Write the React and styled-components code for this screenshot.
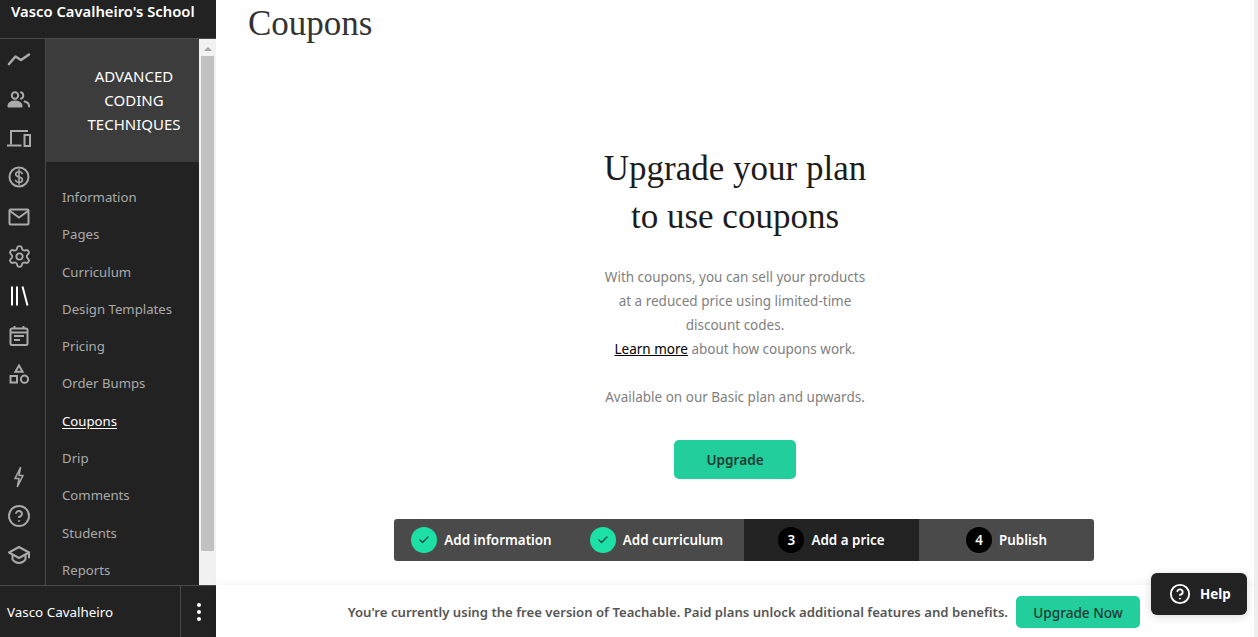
import styled, { createGlobalStyle } from "styled-components";
import { Check, CircleHelp, Settings } from "lucide-react";

const GlobalStyle = createGlobalStyle`
  html, body {
    margin: 0;
    height: 100%;
    overflow: hidden;
    background: #fff;
    font-family: "Noto Sans", "Open Sans", sans-serif;
  }
  * { box-sizing: border-box; }
`;

const Page = styled.div`
  position: relative;
  display: flex;
  width: 1258px;
  height: 637px;
  overflow: hidden;
`;

/* left dark column */
const Sidebar = styled.aside`
  display: flex;
  flex-direction: column;
  flex: 0 0 216px;
  height: 100%;
  background: #222;
`;

const SchoolName = styled.div`
  flex: 0 0 39px;
  padding: 1px 0 0 11px;
  border-bottom: 1px solid #4a4a4a;
  color: #fff;
  font-size: 14.8px;
  font-weight: 600;
  line-height: 20px;
  white-space: nowrap;
`;

const SideBody = styled.div`
  display: flex;
  flex: 1;
  min-height: 0;
`;

const Rail = styled.nav`
  display: flex;
  flex-direction: column;
  flex: 0 0 46px;
  padding: 0.6px 0 10px;
  border-right: 1px solid #4a4a4a;
`;

const RailItem = styled.div`
  display: flex;
  flex: 0 0 39.4px;
  align-items: center;
  justify-content: center;
  padding-right: 7px;
  margin-top: ${(p) => (p.$pushed ? "auto" : "0")};
  color: ${(p) => (p.$active ? "#fff" : "#aaa")};
`;

const Glyph = styled.svg.attrs({ viewBox: "0 0 24 24", width: 24, height: 24 })`
  fill: none;
  stroke: currentColor;
  stroke-width: 2;
  stroke-linecap: round;
  stroke-linejoin: round;
`;

const CourseMenu = styled.div`
  display: flex;
  flex-direction: column;
  flex: 0 0 153px;
  overflow: hidden;
`;

const CourseTitle = styled.div`
  flex: 0 0 123px;
  padding: 25px 0 0 23px;
  background: #3c3c3c;
  color: #fff;
  font-size: 15px;
  line-height: 24px;
  text-align: center;
`;

const MenuList = styled.ul`
  margin: 0;
  padding: 17px 0 0 16px;
  list-style: none;
`;

const MenuItem = styled.li`
  height: 37.3px;
  color: ${(p) => (p.$active ? "#fff" : "#aaa")};
  font-size: 13.2px;
  line-height: 37.3px;
  text-decoration: ${(p) => (p.$active ? "underline" : "none")};
  text-underline-offset: 2px;
`;

const Scrollbar = styled.div`
  display: flex;
  flex: 0 0 17px;
  flex-direction: column;
  align-items: center;
  background: #f1f1f1;
`;

const ScrollArrow = styled.div`
  flex: none;
  width: 8px;
  height: 4px;
  margin-top: 8px;
  border-right: 4px solid transparent;
  border-bottom: 4px solid #a3a3a3;
  border-left: 4px solid transparent;
`;

const ScrollThumb = styled.div`
  flex: 0 0 495px;
  width: 13px;
  margin-top: 5px;
  background: #c1c1c1;
`;

const UserBar = styled.div`
  display: flex;
  flex: 0 0 52px;
  align-items: center;
  border-top: 1px solid #4a4a4a;
  color: #fff;
  font-size: 13.4px;
`;

const UserName = styled.div`
  flex: 0 0 180px;
  padding-left: 7px;
`;

const UserMenu = styled.div`
  display: flex;
  flex: 1;
  flex-direction: column;
  align-items: center;
  justify-content: center;
  gap: 3px;
  align-self: stretch;
  border-left: 1px solid #4a4a4a;
`;

const Dot = styled.span`
  width: 4px;
  height: 4px;
  border-radius: 50%;
  background: #fff;
`;

/* right side */
const Main = styled.main`
  display: flex;
  flex: 1;
  flex-direction: column;
  min-width: 0;
`;

const Content = styled.div`
  display: flex;
  flex: 1;
  flex-direction: column;
  min-height: 0;
`;

const PageTitle = styled.h1`
  margin: 0;
  padding-left: 32px;
  color: #333;
  font-family: "Liberation Serif", serif;
  font-size: 35px;
  font-weight: 400;
  line-height: 47px;
`;

const Pitch = styled.section`
  display: flex;
  flex-direction: column;
  align-items: center;
  margin-top: 98px;
`;

const PitchTitle = styled.h2`
  margin: 0;
  color: #1c1c1c;
  font-family: "Liberation Serif", serif;
  font-size: 35px;
  font-weight: 400;
  line-height: 48px;
  text-align: center;
`;

const PitchCopy = styled.p`
  margin: 24px 0 0;
  color: #7f7f7f;
  font-size: 13.5px;
  line-height: 24px;
  text-align: center;
`;

const PitchLink = styled.a`
  color: #000;
  text-decoration: underline;
`;

const UpgradeButton = styled.button`
  width: ${(p) => p.$width};
  height: ${(p) => p.$height};
  padding: 0;
  border: 0;
  border-radius: 5px;
  background: #22ce9c;
  color: #203a33;
  font-family: inherit;
  font-size: 13.6px;
  font-weight: ${(p) => p.$weight};
`;

const PitchButton = styled(UpgradeButton)`
  margin-top: 31px;
`;

const Steps = styled.ol`
  display: grid;
  grid-template-columns: repeat(4, 175px);
  height: 42px;
  margin: 40px 0 0 18px;
  padding: 0;
  overflow: hidden;
  border-radius: 3px;
  background: #4a4a4a;
  list-style: none;
`;

const Step = styled.li`
  display: flex;
  align-items: center;
  justify-content: center;
  gap: 7px;
  background: ${(p) => (p.$current ? "#222" : "transparent")};
  color: #fff;
  font-size: 13.4px;
  font-weight: 600;
  white-space: nowrap;
`;

const StepBadge = styled.span`
  display: flex;
  flex: 0 0 26px;
  align-items: center;
  justify-content: center;
  height: 26px;
  border-radius: 50%;
  background: ${(p) => (p.$done ? "#1de0a6" : "#000")};
  color: ${(p) => (p.$done ? "#17473a" : "#fff")};
`;

const Banner = styled.div`
  display: flex;
  flex: 0 0 52px;
  align-items: center;
  justify-content: flex-end;
  gap: 8px;
  padding: 2px 114px 0 0;
  box-shadow: 0 -2px 8px rgba(0, 0, 0, 0.04);
  color: #555;
  font-size: 13.15px;
  font-weight: 600;
`;

const PageGutter = styled.div`
  flex: 0 0 4px;
  background: #eee;
`;

const HelpButton = styled.button`
  position: absolute;
  top: 573px;
  left: 1151px;
  display: flex;
  align-items: center;
  gap: 9px;
  width: 96px;
  height: 42px;
  padding: 0 0 0 18px;
  border: 0;
  border-radius: 6px;
  background: #222;
  box-shadow: 0 2px 10px rgba(0, 0, 0, 0.15);
  color: #fff;
  font-family: inherit;
  font-size: 13.4px;
  font-weight: 700;
`;

const topIcons = [
  <path key="trend" d="M2 17 L8.5 9.5 L14 13 L22 7.5" strokeWidth="2.6" />,
  <g key="users">
    <circle cx="8" cy="8.5" r="3.2" />
    <path d="M1.5 19.5v-1c0-2.4 3-4 6.5-4s6.5 1.6 6.5 4v1z" fill="currentColor" />
    <path d="M14 5.3a3.4 3.4 0 0 1 0 6.4" />
    <path d="M17.5 14.5c2.6.6 4.6 2 4.6 5" />
  </g>,
  <g key="devices" strokeLinecap="butt" strokeLinejoin="miter">
    <path d="M4 18.5V5h17" />
    <path d="M0 19.5h14.5" />
    <rect x="17.5" y="9" width="5.5" height="11" />
  </g>,
  <g key="dollar">
    <circle cx="12" cy="12" r="9.5" />
    <path d="M15.3 8.6c-.5-1.2-1.7-1.9-3.3-1.9-2 0-3.3 1.1-3.3 2.6 0 1.6 1.3 2.2 3.3 2.7s3.4 1.1 3.4 2.7c0 1.6-1.4 2.7-3.4 2.7-1.7 0-3-.8-3.5-2M12 4.8v14.4" strokeWidth="1.6" />
  </g>,
  <g key="mail" strokeLinejoin="miter">
    <rect x="2.5" y="4.5" width="19" height="15" rx="1" />
    <path d="M3 6l9 6.5L21 6" />
  </g>,
  "settings",
  <g key="library" strokeLinecap="butt">
    <path d="M5 2.5v19M10 2.5v19M15.5 2.5l5 19" />
  </g>,
  <g key="calendar" strokeLinejoin="miter" strokeLinecap="butt" transform="translate(0 1)">
    <rect x="3.5" y="4.5" width="17" height="16.5" rx="1.5" />
    <path d="M7.5 2v3M16.5 2v3M3.5 8.5h17M7 12h10M7 16h6" />
  </g>,
  <g key="shapes" strokeLinejoin="miter">
    <path d="M12 3.5l3.6 6.2H8.4z" />
    <rect x="3.5" y="14" width="6.5" height="6.5" />
    <circle cx="17.5" cy="17.2" r="3.6" />
  </g>,
];

const menuItems = [
  "Information",
  "Pages",
  "Curriculum",
  "Design Templates",
  "Pricing",
  "Order Bumps",
  "Coupons",
  "Drip",
  "Comments",
  "Students",
  "Reports",
];

const steps = [
  { label: "Add information", done: true },
  { label: "Add curriculum", done: true },
  { label: "Add a price", badge: 3, current: true },
  { label: "Publish", badge: 4 },
];

export default function App() {
  return (
    <Page>
      <GlobalStyle />
      <Sidebar>
        <SchoolName>Vasco Cavalheiro's School</SchoolName>
        <SideBody>
          <Rail>
            {topIcons.map((icon, index) => (
              <RailItem key={index} $active={index === 6}>
                {icon === "settings" ? (
                  <Settings size={25} strokeWidth={1.8} />
                ) : (
                  <Glyph>{icon}</Glyph>
                )}
              </RailItem>
            ))}
            <RailItem $pushed>
              <Glyph>
                <path d="M13.5 2.5L8 13.5h4l-1.5 8L16 10.5h-4z" strokeWidth="1.6" />
              </Glyph>
            </RailItem>
            <RailItem>
              <CircleHelp size={24} strokeWidth={1.9} />
            </RailItem>
            <RailItem>
              <Glyph>
                <path d="M12 4L2 9.5 12 15l10-5.5z" />
                <path d="M5.5 12v4.5c1.5 2 4 3.5 6.5 3.5s5-1.5 6.5-3.5V12" />
                <path d="M22 9.5v5" />
              </Glyph>
            </RailItem>
          </Rail>
          <CourseMenu>
            <CourseTitle>ADVANCED CODING TECHNIQUES</CourseTitle>
            <MenuList>
              {menuItems.map((item) => (
                <MenuItem key={item} $active={item === "Coupons"}>
                  {item}
                </MenuItem>
              ))}
            </MenuList>
          </CourseMenu>
          <Scrollbar>
            <ScrollArrow />
            <ScrollThumb />
          </Scrollbar>
        </SideBody>
        <UserBar>
          <UserName>Vasco Cavalheiro</UserName>
          <UserMenu>
            <Dot />
            <Dot />
            <Dot />
          </UserMenu>
        </UserBar>
      </Sidebar>

      <Main>
        <Content>
          <PageTitle>Coupons</PageTitle>
          <Pitch>
            <PitchTitle>
              Upgrade your plan
              <br />
              to use coupons
            </PitchTitle>
            <PitchCopy>
              With coupons, you can sell your products
              <br />
              at a reduced price using limited-time
              <br />
              discount codes.
              <br />
              <PitchLink href="#">Learn more</PitchLink> about how coupons work.
              <br />
              <br />
              Available on our Basic plan and upwards.
            </PitchCopy>
            <PitchButton $width="122px" $height="39px" $weight={600}>
              Upgrade
            </PitchButton>
            <Steps>
              {steps.map((step) => (
                <Step key={step.label} $current={step.current}>
                  <StepBadge $done={step.done}>
                    {step.done ? <Check size={12} strokeWidth={2.5} /> : step.badge}
                  </StepBadge>
                  {step.label}
                </Step>
              ))}
            </Steps>
          </Pitch>
        </Content>
        <Banner>
          You're currently using the free version of Teachable. Paid plans unlock additional
          features and benefits.
          <UpgradeButton $width="124px" $height="32px" $weight={500}>
            Upgrade Now
          </UpgradeButton>
        </Banner>
      </Main>
      <PageGutter />

      <HelpButton>
        <CircleHelp size={22} strokeWidth={2} />
        Help
      </HelpButton>
    </Page>
  );
}
